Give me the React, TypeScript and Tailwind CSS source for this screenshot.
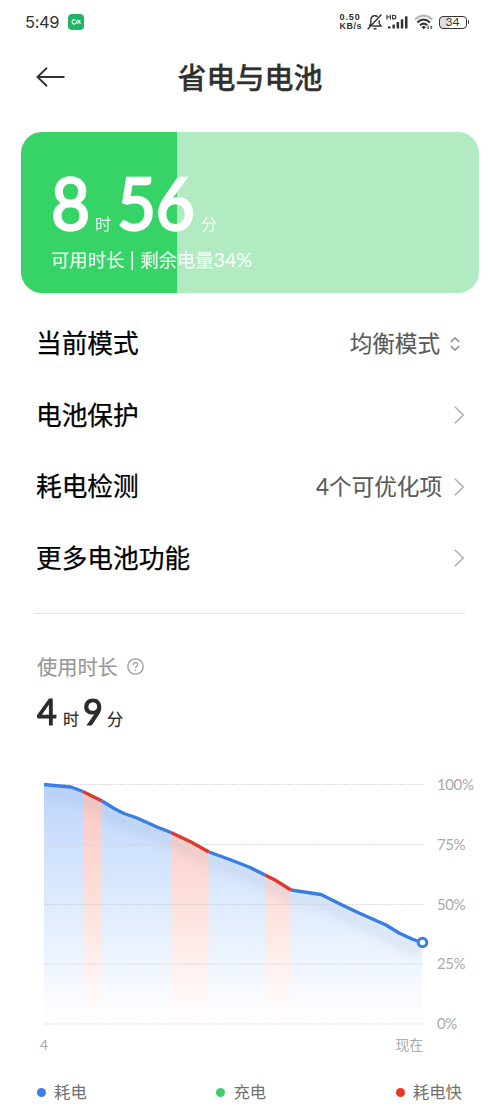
import { ReactNode } from 'react'

interface MenuRow {
  label: string
  value?: string
  kind: 'select' | 'link'
}

const rows: MenuRow[] = [
  { label: '当前模式', value: '均衡模式', kind: 'select' },
  { label: '电池保护', kind: 'link' },
  { label: '耗电检测', value: '4个可优化项', kind: 'link' },
  { label: '更多电池功能', kind: 'link' },
]

type Point = [number, number]

// battery curve, plot area is 378 x 239
const segments: { fast: boolean; points: Point[] }[] = [
  { fast: false, points: [[0, 0.5], [13, 1.8], [27, 3], [39, 7.5]] },
  { fast: true, points: [[39, 7.5], [58, 17]] },
  { fast: false, points: [[58, 17], [71, 25], [80, 29.5], [93, 34], [113, 43], [127, 48.5]] },
  { fast: true, points: [[127, 48.5], [147, 58], [165, 68]] },
  { fast: false, points: [[165, 68], [187, 76], [205, 83], [221, 91]] },
  { fast: true, points: [[221, 91], [231, 96], [247, 106]] },
  { fast: false, points: [[247, 106], [277, 110.5], [296, 120], [315, 129], [342, 141], [355, 149], [368, 155], [378, 158.5]] },
]

const toPoints = (points: Point[]) => points.map((p) => p.join(',')).join(' ')
const curve = segments.flatMap((s) => s.points)

const legend = [
  { label: '耗电', dot: 'bg-[#3a7fee]' },
  { label: '充电', dot: 'bg-[#43ca69]' },
  { label: '耗电快', dot: 'bg-[#ee3524]' },
]

function StatusBar() {
  return (
    <div className="h-11 pl-[25px] pr-[31px] flex items-center justify-between text-[#333]">
      <div className="flex items-center">
        <span className="w-[43px] font-['Inter'] text-[16.5px] leading-none tracking-[-0.4px]">5:49</span>
        <svg width="16" height="16" viewBox="0 0 16 16" fill="none">
          <rect width="16" height="16" rx="4" fill="#22b466" />
          <path d="M7.5 6.3A2.1 2.1 0 1 0 7.5 9.5L9.6 6.1L12.6 9.8M8.6 9.6L10.8 8.6M11.7 6.2V8" stroke="#e9fff2" strokeWidth="1.1" />
        </svg>
      </div>
      <div className="flex items-center">
        <div className="w-[27px] font-['Liberation_Sans'] text-[9px] leading-[9px] font-bold tracking-[0.5px] whitespace-nowrap">
          <div className="tracking-[0.9px]">0.50</div>
          <div>KB/s</div>
        </div>
        <svg width="18" height="18" viewBox="0 0 18 18" fill="none" stroke="currentColor" strokeWidth="1.4" className="-ml-px">
          <path d="M3.2 13L4.8 10.6V7.2C5 4.4 6.8 2.8 9 2.8C10 2.8 10.9 3.1 11.6 3.8M13.2 7.2V10.4L15 13H6.2M7.6 15.8H10.6M1.7 16.2L15.4 1.6" />
        </svg>
        <svg width="24" height="18" viewBox="0 0 24 18" fill="currentColor" className="ml-[2px]">
          <path d="M1 1.7V6.4M1 4H4.4M4.4 1.7V6.4M6.6 1.7V6.4M6.6 2.2H7.7Q9.9 2.2 9.9 4.05Q9.9 5.9 7.7 5.9H6.6" fill="none" stroke="currentColor" strokeWidth="1.1" />
          <rect x="2" y="13.2" width="2.5" height="2.3" rx="0.6" />
          <rect x="6.4" y="11.4" width="2.5" height="4.1" rx="0.6" />
          <rect x="10.6" y="8.9" width="2.5" height="6.6" rx="0.6" />
          <rect x="14.8" y="6.3" width="2.5" height="9.2" rx="0.6" />
          <rect x="19" y="3.2" width="2.5" height="12.3" rx="0.6" />
        </svg>
        <svg width="20" height="18" viewBox="0 0 20 18" fill="none" strokeWidth="2" className="ml-[4px]">
          <path d="M1 6.4Q9.6 -1.2 18.4 6.4" stroke="#b9b9b9" />
          <path d="M3.3 9.4Q9.6 3.7 16 9.4" stroke="currentColor" />
          <path d="M6 12.2Q9.6 9 13.3 12.2" stroke="currentColor" />
          <path d="M7.4 14Q9.7 12.2 12 14L9.7 16.2Z" fill="currentColor" />
          <path d="M14.2 12.5V15.5M13.3 14.6L14.2 15.6M17.2 16V13M18.1 13.9L17.2 12.9" stroke="currentColor" strokeWidth="1" />
        </svg>
        <div className="ml-[5px] flex items-center">
          <div className="w-[28px] h-[13px] rounded-[4px] border-[1.5px] border-[#333] bg-[linear-gradient(90deg,#dedede_34%,#fff_34%)] flex items-center justify-center font-['Lato'] text-[12px] leading-none">
            34
          </div>
          <div className="ml-px w-[1.5px] h-[4px] rounded-r bg-[#333]" />
        </div>
      </div>
    </div>
  )
}

function Unit({ className, children }: { className: string; children: ReactNode }) {
  return <span className={`text-[16px] leading-none ${className}`}>{children}</span>
}

function RowIcon({ kind }: { kind: MenuRow['kind'] }) {
  if (kind === 'select') {
    return (
      <svg width="10" height="14" viewBox="0 0 10 14" fill="none" stroke="#8b8f9c" strokeWidth="1.6" className="ml-[10px] mr-[5px]">
        <path d="M0.8 4.8L5 1L9.2 4.8M0.8 9.2L5 13L9.2 9.2" />
      </svg>
    )
  }
  return (
    <svg width="10" height="18" viewBox="0 0 10 18" fill="none" stroke="#aaa" strokeWidth="1.4" className="ml-[12px] mr-px">
      <path d="M0.8 0.8L9.2 9L0.8 17.2" />
    </svg>
  )
}

function BatteryChart() {
  return (
    <svg width="378" height="239" viewBox="0 0 378 239" fill="none" className="overflow-visible">
      <defs>
        <linearGradient id="normal" x1="0" y1="0" x2="0" y2="239" gradientUnits="userSpaceOnUse">
          <stop offset="0" stopColor="#bcd5fc" />
          <stop offset="0.5" stopColor="#dfebfd" />
          <stop offset="1" stopColor="#ffffff" />
        </linearGradient>
        <linearGradient id="fast" x1="0" y1="0" x2="0" y2="239" gradientUnits="userSpaceOnUse">
          <stop offset="0" stopColor="#fbc6c0" />
          <stop offset="0.5" stopColor="#fde0dc" />
          <stop offset="1" stopColor="#ffffff" />
        </linearGradient>
        <clipPath id="area">
          <polygon points={`0,239 ${toPoints(curve)} 378,239`} />
        </clipPath>
        <filter id="soft" x="-10%" y="-20%" width="120%" height="150%">
          <feGaussianBlur stdDeviation="4" />
        </filter>
      </defs>
      <g clipPath="url(#area)">
        <rect width="378" height="239" fill="url(#normal)" />
        {segments.filter((s) => s.fast).map((s) => {
          const start = s.points[0][0]
          const end = s.points[s.points.length - 1][0]
          return <rect key={start} x={start} width={end - start - 0.5} height="239" fill="url(#fast)" />
        })}
        <polyline points={toPoints(curve)} transform="translate(0 9)" stroke="#7890b0" strokeOpacity="0.13" strokeWidth="12" filter="url(#soft)" />
      </g>
      {[0, 60, 120, 179.5, 239.5].map((y) => (
        <line key={y} x1="0" x2="379" y1={y + 0.5} y2={y + 0.5} stroke="#d0d0d2" strokeDasharray="1.4 1.4" />
      ))}
      {segments.map((s, i) => (
        <polyline key={i} points={toPoints(s.points)} stroke={s.fast ? '#e0382c' : '#397ee6'} strokeWidth="3.4" strokeLinejoin="round" />
      ))}
      <circle cx="378.5" cy="158.5" r="4.3" fill="#fff" stroke="#397ee6" strokeWidth="3" />
    </svg>
  )
}

export default function App() {
  return (
    <div className="w-[500px] h-[1111px] overflow-hidden bg-white font-['Lato','Noto_Sans_CJK_SC',sans-serif]">
      <StatusBar />

      <header className="h-[66px] px-9 flex items-center">
        <svg width="30" height="20" viewBox="0 0 30 20" fill="none" stroke="#333" strokeWidth="1.9">
          <path d="M11 0.8L1.5 10L11 19.2M1.5 10H28.5" />
        </svg>
        <h1 className="flex-1 mr-[30px] text-center text-[29px] leading-none font-medium text-[#303030] [-webkit-text-stroke:0.3px_#303030]">省电与电池</h1>
      </header>

      <section className="mt-[22px] mx-[21px] h-[161px] rounded-[21px] bg-[linear-gradient(90deg,#36d367_34%,#b2ebc2_34%)] pl-[30px] pt-[39px] text-white">
        <div className="flex items-baseline h-[77px] leading-[64px]">
          <span className="w-[39px] origin-left scale-x-95 text-[71px] [-webkit-text-stroke:2.4px_#fff]">8</span>
          <Unit className="ml-[5px] opacity-90">时</Unit>
          <span className="ml-[6px] w-[79px] origin-left scale-x-95 text-[71px] tracking-[-0.5px] [-webkit-text-stroke:2.4px_#fff]">56</span>
          <Unit className="ml-[5px] opacity-80">分</Unit>
        </div>
        <div className="text-[18.3px] leading-6 opacity-90 tracking-[0.05px] [-webkit-text-stroke:0.2px_#fff]">
          可用时长<span className="mx-px"> | </span>剩余电量<span className="text-[19.5px]">34%</span>
        </div>
      </section>

      <section className="mt-[15px] pl-9 pr-[35px]">
        {rows.map((row) => (
          <div key={row.label} className="h-[71.5px] flex items-center">
            <span className="flex-1 pt-px text-[25.7px] leading-none text-black [-webkit-text-stroke:0.25px_#000]">{row.label}</span>
            {row.value && (
              <span className="pt-px text-[22.6px] leading-none text-[#5a5a5a] [-webkit-text-stroke:0.15px_#5a5a5a]">{row.value}</span>
            )}
            <RowIcon kind={row.kind} />
          </div>
        ))}
      </section>

      <div className="mt-[19px] mx-[34px] h-px bg-[#e4e4e4]" />

      <section className="mt-[40px]">
        <div className="pl-[37px] h-[26px] flex items-center text-[#999]">
          <span className="text-[20.2px] leading-none [-webkit-text-stroke:0.2px_#999]">使用时长</span>
          <svg width="17" height="17" viewBox="0 0 17 17" fill="none" stroke="currentColor" strokeWidth="1.3" className="ml-[9px] -mt-px">
            <circle cx="8.5" cy="8.5" r="7.7" />
            <path d="M6.3 6.9C6.3 5.4 7.2 4.6 8.5 4.6C9.8 4.6 10.7 5.4 10.7 6.6C10.7 8.2 8.5 8.2 8.5 10.1M8.5 11.4V12.7" />
          </svg>
        </div>
        <div className="mt-[11px] pl-[37px] h-[43px] flex items-baseline leading-[40px] text-[#2b2b2b]">
          <span className="w-[21px] origin-left scale-x-95 text-[36px] [-webkit-text-stroke:1.2px_#2b2b2b]">4</span>
          <Unit className="ml-[5px] [-webkit-text-stroke:0.2px_#2b2b2b]">时</Unit>
          <span className="ml-[4px] w-[20px] origin-left scale-x-95 text-[36px] [-webkit-text-stroke:1.2px_#2b2b2b]">9</span>
          <Unit className="ml-[4px] [-webkit-text-stroke:0.2px_#2b2b2b]">分</Unit>
        </div>

        <div className="mt-[50px] pl-[44px] flex">
          <BatteryChart />
          <div className="-my-[7px] ml-[15px] flex flex-col justify-between text-[15px] leading-[14px] tracking-[-0.4px] text-[#aaa]">
            <span>100%</span>
            <span>75%</span>
            <span>50%</span>
            <span>25%</span>
            <span>0%</span>
          </div>
        </div>
        <div className="mt-[14px] ml-[40px] mr-[77px] flex justify-between text-[13.8px] leading-4 text-[#aaa]">
          <span>4</span>
          <span>现在</span>
        </div>
      </section>

      <div className="mt-[28px] pl-[37px] pr-[38px] flex justify-between text-[16.4px] leading-[22px] text-[#707070]">
        {legend.map((item) => (
          <div key={item.label} className="flex items-center gap-[8px]">
            <span className={`w-[9px] h-[9px] rounded-full ${item.dot}`} />
            {item.label}
          </div>
        ))}
      </div>
    </div>
  )
}
